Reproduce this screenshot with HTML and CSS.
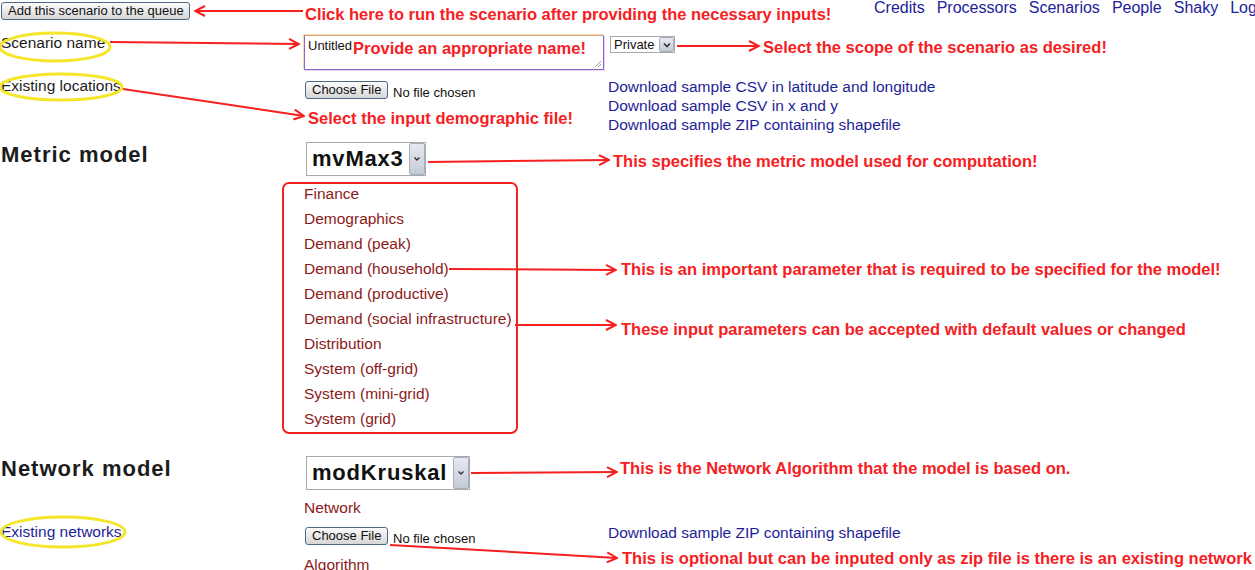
FILE: index.html
```html
<!DOCTYPE html>
<html lang="en">
<head>
<meta charset="utf-8">
<title>Scenario</title>
<link rel="stylesheet" href="styles.css">
</head>
<body>
<div class="page">
  <header class="topbar">
    <button class="btn btn-queue">Add this scenario to the queue</button>
    <nav class="nav">
      <a href="#">Credits</a>
      <a href="#">Processors</a>
      <a href="#">Scenarios</a>
      <a href="#">People</a>
      <a href="#">Shaky</a>
      <a href="#">Logout</a>
    </nav>
  </header>

  <section class="row row-name">
    <div class="label">Scenario name</div>
    <div class="name-controls">
      <div class="textarea">Untitled
        <svg class="grip" width="9" height="9" viewBox="0 0 9 9"><path d="M8 2 L2 8 M8 5 L5 8" stroke="#a0a0a0" stroke-width="1"/></svg>
      </div>
      <div class="select select-sm">
        <span class="select-text">Private</span>
        <span class="select-arrow"><svg width="12" height="12" viewBox="0 0 12 12"><path d="M3 4.5 L6 7.5 L9 4.5" fill="none" stroke="#333" stroke-width="1.6"/></svg></span>
      </div>
    </div>
  </section>

  <section class="row row-loc">
    <div class="label">Existing locations</div>
    <div class="file">
      <button class="btn btn-file">Choose File</button>
      <span class="file-status">No file chosen</span>
    </div>
    <div class="links">
      <a href="#">Download sample CSV in latitude and longitude</a>
      <a href="#">Download sample CSV in x and y</a>
      <a href="#">Download sample ZIP containing shapefile</a>
    </div>
  </section>

  <section class="row row-metric">
    <h2 class="heading">Metric model</h2>
    <div class="model-body">
      <div class="select select-lg select-metric">
        <span class="select-text">mvMax3</span>
        <span class="select-arrow"><svg width="12" height="12" viewBox="0 0 12 12"><path d="M3.5 4.5 L6 7 L8.5 4.5" fill="none" stroke="#333" stroke-width="1.4"/></svg></span>
      </div>
      <ul class="params">
        <li>Finance</li>
        <li>Demographics</li>
        <li>Demand (peak)</li>
        <li>Demand (household)</li>
        <li>Demand (productive)</li>
        <li>Demand (social infrastructure)</li>
        <li>Distribution</li>
        <li>System (off-grid)</li>
        <li>System (mini-grid)</li>
        <li>System (grid)</li>
      </ul>
    </div>
  </section>

  <section class="row row-network">
    <h2 class="heading">Network model</h2>
    <div class="model-body">
      <div class="select select-lg select-network">
        <span class="select-text">modKruskal</span>
        <span class="select-arrow"><svg width="12" height="12" viewBox="0 0 12 12"><path d="M3.5 4.5 L6 7 L8.5 4.5" fill="none" stroke="#333" stroke-width="1.4"/></svg></span>
      </div>
      <div class="param">Network</div>
    </div>
  </section>

  <section class="row row-existing">
    <div class="label label-link">Existing networks</div>
    <div class="file">
      <button class="btn btn-file">Choose File</button>
      <span class="file-status">No file chosen</span>
    </div>
    <div class="links">
      <a href="#">Download sample ZIP containing shapefile</a>
    </div>
  </section>

  <section class="row row-alg">
    <div></div>
    <div class="param">Algorithm</div>
  </section>

  <div class="annotations">
    <svg class="overlay" width="1255" height="570" viewBox="0 0 1255 570">
      <defs>
        <marker id="ah" viewBox="0 0 12 12" refX="11" refY="6" markerWidth="12" markerHeight="12" markerUnits="userSpaceOnUse" orient="auto">
          <path d="M1 1 L11 6 L1 11" fill="none" stroke="#f5201f" stroke-width="2"/>
        </marker>
      </defs>
      <g fill="none" stroke="#f5e62a" stroke-width="3">
        <ellipse cx="55" cy="47" rx="55" ry="14"/>
        <ellipse cx="61" cy="87" rx="61" ry="13"/>
        <ellipse cx="63" cy="532" rx="62" ry="15"/>
      </g>
      <rect x="283" y="183" width="234" height="250" rx="6" ry="6" fill="none" stroke="#f5201f" stroke-width="2"/>
      <g fill="none" stroke="#f5201f" stroke-width="2" marker-end="url(#ah)">
        <path d="M303 11 L195 11"/>
        <path d="M110 42 L299 44"/>
        <path d="M677 46 L759 46"/>
        <path d="M123 89 L304 116"/>
        <path d="M428 162 L609 160"/>
        <path d="M449 269 L616 270"/>
        <path d="M515 325 L616 325"/>
        <path d="M471 473 L617 472"/>
        <path d="M390 545 L617 558"/>
      </g>
    </svg>
    <span class="note note-1">Click here to run the scenario after providing the necessary inputs!</span>
    <span class="note note-2">Provide an appropriate name!</span>
    <span class="note note-3">Select the scope of the scenario as desired!</span>
    <span class="note note-4">Select the input demographic file!</span>
    <span class="note note-5">This specifies the metric model used for computation!</span>
    <span class="note note-6">This is an important parameter that is required to be specified for the model!</span>
    <span class="note note-7">These input parameters can be accepted with default values or changed</span>
    <span class="note note-8">This is the Network Algorithm that the model is based on.</span>
    <span class="note note-9">This is optional but can be inputed only as zip file is there is an existing network</span>
  </div>
</div>
</body>
</html>
```

FILE: styles.css
```css
html, body {
  margin: 0;
  padding: 0;
  background: #ffffff;
}

body {
  font-family: "Liberation Sans", Arial, sans-serif;
  color: #1c1c1c;
}

.page {
  position: relative;
  width: 1255px;
  height: 570px;
  overflow: hidden;
}

/* ---------- top bar ---------- */
.topbar {
  display: grid;
  grid-template-columns: 874px 1fr;
  height: 22px;
}

.btn {
  font-family: "Liberation Sans", Arial, sans-serif;
  font-size: 13px;
  line-height: 16px;
  color: #111;
  height: 18px;
  box-sizing: border-box;
  padding: 0 6px;
  border: 1px solid #4c6885;
  border-radius: 3px;
  background: linear-gradient(#fbfbfb, #e9e9e9 50%, #d6d6d6);
  white-space: nowrap;
}

.btn-queue {
  justify-self: start;
  width: 189px;
  margin: 2px 0 0 1px;
}

.nav {
  display: flex;
  gap: 12px;
  white-space: nowrap;
  overflow: hidden;
  font-size: 16px;
  line-height: 16px;
}

.nav a {
  color: #22229a;
  text-decoration: none;
}

/* ---------- form rows ---------- */
.row {
  display: grid;
  grid-template-columns: 304px 304px 1fr;
  align-items: start;
}

.label {
  font-size: 15.5px;
  line-height: 18px;
  padding-left: 1px;
}

.label-link {
  color: #1e1e96;
}

.row-name {
  margin-top: 12px;
}

.name-controls {
  grid-column: 2 / 4;
  display: flex;
  align-items: flex-start;
  gap: 6px;
}

.textarea {
  position: relative;
  width: 300px;
  height: 35px;
  margin-top: 1px;
  box-sizing: border-box;
  padding: 2px 3px;
  border: 1px solid #9462cc;
  border-top-color: #d2a77a;
  box-shadow: -1px -1px 0 #f6d9a8, 1px 1px 0 #e6d6f2;
  font-size: 13px;
  line-height: 15px;
  color: #111;
}

.grip {
  position: absolute;
  right: 1px;
  bottom: 1px;
}

.select {
  display: flex;
  align-items: stretch;
  justify-content: space-between;
  box-sizing: border-box;
  border: 1px solid #a9a9a9;
  background: #fff;
  color: #111;
}

.select-text {
  white-space: nowrap;
}

.select-arrow {
  display: flex;
  align-items: center;
  justify-content: center;
  box-sizing: border-box;
  border: 1px solid #a7adbf;
  border-radius: 2px;
  background: linear-gradient(#e6e9f1, #c5cad8);
}

.select-sm {
  width: 65px;
  height: 17px;
  margin-top: 2px;
  font-size: 13px;
  line-height: 15px;
  padding-left: 3px;
}

.select-sm .select-arrow {
  width: 15px;
}

.select-lg {
  height: 34px;
  margin-left: 2px;
  font-size: 22px;
  font-weight: bold;
  letter-spacing: 0.8px;
  line-height: 32px;
  padding-left: 5px;
}

.select-lg .select-arrow {
  width: 16px;
}

.select-metric {
  width: 120px;
}

.select-network {
  width: 164px;
}

.row-loc {
  margin-top: 7px;
}

.file {
  display: flex;
  align-items: flex-start;
  gap: 5px;
  margin: 4px 0 0 1px;
}

.btn-file {
  width: 83px;
}

.file-status {
  font-size: 13px;
  line-height: 15px;
  margin-top: 4px;
  white-space: nowrap;
  color: #111;
}

.links {
  display: flex;
  flex-direction: column;
  font-size: 15.5px;
  line-height: 19px;
}

.links a {
  color: #1e1e96;
  text-decoration: none;
  white-space: nowrap;
}

.row-metric {
  margin-top: 8px;
}

.heading {
  margin: 0;
  padding-left: 1px;
  font-size: 22px;
  line-height: 26px;
  font-weight: bold;
  letter-spacing: 1px;
  color: #1c1c1c;
}

.model-body {
  grid-column: 2 / 4;
}

.params {
  list-style: none;
  margin: 5px 0 0;
  padding: 0;
}

.params li,
.param {
  font-size: 15.5px;
  line-height: 25px;
  color: #8b1a1a;
  white-space: nowrap;
}

.row-network {
  margin-top: 25px;
}

.row-network .param {
  margin-top: 5px;
}

.row-existing {
  margin-top: 3px;
}

.row-alg {
  margin-top: 6px;
}

/* ---------- annotation overlay ---------- */
.annotations {
  position: absolute;
  left: 0;
  top: 0;
  width: 1255px;
  height: 570px;
  pointer-events: none;
}

.overlay {
  position: absolute;
  left: 0;
  top: 0;
}

.note {
  position: absolute;
  font-family: "Liberation Sans", Arial, sans-serif;
  font-weight: bold;
  font-size: 16.5px;
  line-height: 20px;
  color: #f5201f;
  white-space: nowrap;
}

.note-1 { left: 305px; top: 4px; }
.note-2 { left: 353px; top: 38px; }
.note-3 { left: 763px; top: 37px; }
.note-4 { left: 308px; top: 108px; }
.note-5 { left: 613px; top: 151px; }
.note-6 { left: 621px; top: 259px; }
.note-7 { left: 621px; top: 319px; }
.note-8 { left: 620px; top: 458px; }
.note-9 { left: 622px; top: 548px; }
```
